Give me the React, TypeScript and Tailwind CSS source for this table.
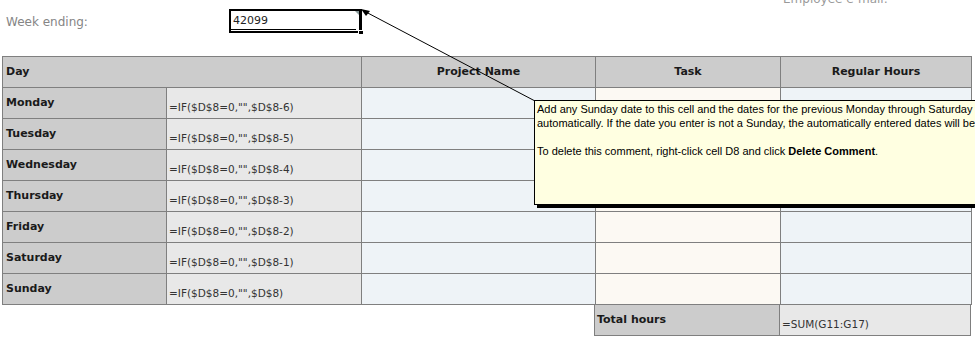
const days = [
  { day: "Monday", formula: '=IF($D$8=0,"",$D$8-6)' },
  { day: "Tuesday", formula: '=IF($D$8=0,"",$D$8-5)' },
  { day: "Wednesday", formula: '=IF($D$8=0,"",$D$8-4)' },
  { day: "Thursday", formula: '=IF($D$8=0,"",$D$8-3)' },
  { day: "Friday", formula: '=IF($D$8=0,"",$D$8-2)' },
  { day: "Saturday", formula: '=IF($D$8=0,"",$D$8-1)' },
  { day: "Sunday", formula: '=IF($D$8=0,"",$D$8)' },
];

const cols = "grid grid-cols-[164px_195px_234px_185px_191px]";
const cell = "border-r border-b border-[#7f7f7f] h-[31px]";

const App = () => {
  return (
    <div
      className="relative w-[975px] h-[344px] overflow-hidden bg-white text-[#1a1a1a]"
      style={{ fontFamily: '"DejaVu Sans", sans-serif' }}
    >
      {/* week ending row */}
      <div className="flex h-[56px] items-start">
        <div className="w-[229px] pl-[6px] pt-[15px] text-[12px] leading-[14px] text-[#858585]">
          Week ending:
        </div>
        <div className="relative mt-[9px] h-[24px] w-[133px] border-2 border-r-[3px] border-black bg-white">
          <div className="pl-[2px] text-[11px] leading-[19px] text-[#222]">42099</div>
          <div className="absolute left-0 right-[3px] bottom-[1px] border-b border-black" />
          <div className="absolute -right-[5px] -bottom-[4px] h-[5px] w-[6px] border border-white bg-black" />
          <div className="absolute right-0 top-0 h-0 w-0 border-l-[4px] border-t-[4px] border-l-transparent border-t-[#8a9a9a]" />
        </div>
        <div className="ml-[421px] -mt-[8px] text-[12px] leading-[14px] text-[#9a9a9a]">
          Employee e-mail:
        </div>
      </div>

      {/* timesheet grid */}
      <div className="ml-[2px] w-[970px] text-[11px]">
        <div className={`${cols} border-t border-l border-[#7f7f7f] bg-[#cccccc] font-bold`}>
          <div className={`${cell} col-span-2 flex items-center pl-[3px]`}>Day</div>
          <div className={`${cell} flex items-center justify-center`}>Project Name</div>
          <div className={`${cell} flex items-center justify-center`}>Task</div>
          <div className={`${cell} flex items-center justify-center`}>Regular Hours</div>
        </div>
        {days.map((d) => (
          <div key={d.day} className={`${cols} border-l border-[#7f7f7f]`}>
            <div className={`${cell} flex items-center bg-[#cccccc] pl-[3px] font-bold`}>{d.day}</div>
            <div className={`${cell} flex items-end bg-[#e8e8e8] pl-[2px] pb-[2px] text-[10.5px] text-[#333]`}>
              {d.formula}
            </div>
            <div className={`${cell} bg-[#eef3f7]`} />
            <div className={`${cell} bg-[#fcf9f3]`} />
            <div className={`${cell} bg-[#eef3f7]`} />
          </div>
        ))}
        <div className={cols}>
          <div className="col-span-2" />
          <div className="h-[31px] border-r border-[#7f7f7f]" />
          <div className={`${cell} flex items-center bg-[#cccccc] pl-[2px] font-bold`}>Total hours</div>
          <div className={`${cell} flex items-end bg-[#e8e8e8] pl-[2px] pb-[2px] text-[10.5px] text-[#333]`}>
            =SUM(G11:G17)
          </div>
        </div>
      </div>

      {/* comment pointer */}
      <svg className="pointer-events-none absolute left-0 top-0" width="975" height="344">
        <line x1="364" y1="11" x2="535" y2="101" stroke="#000" strokeWidth="1" />
        <polygon points="361,9 370,11 366,16" fill="#000" />
      </svg>

      {/* cell comment */}
      <div
        className="absolute left-[534px] top-[100px] h-[105px] w-[470px] border border-black bg-[#ffffe1] px-[2px] pt-[1px] text-[11px] leading-[14px] text-black shadow-[3px_3px_0_#000]"
        style={{ fontFamily: '"Liberation Sans", Arial, sans-serif' }}
      >
        <p className="whitespace-nowrap">
          Add any Sunday date to this cell and the dates for the previous Monday through Saturday will be entered
        </p>
        <p className="whitespace-nowrap">
          automatically. If the date you enter is not a Sunday, the automatically entered dates will be incorrect.
        </p>
        <p className="mt-[14px]">
          To delete this comment, right-click cell D8 and click <b>Delete Comment</b>.
        </p>
      </div>
    </div>
  );
};

export default App;
